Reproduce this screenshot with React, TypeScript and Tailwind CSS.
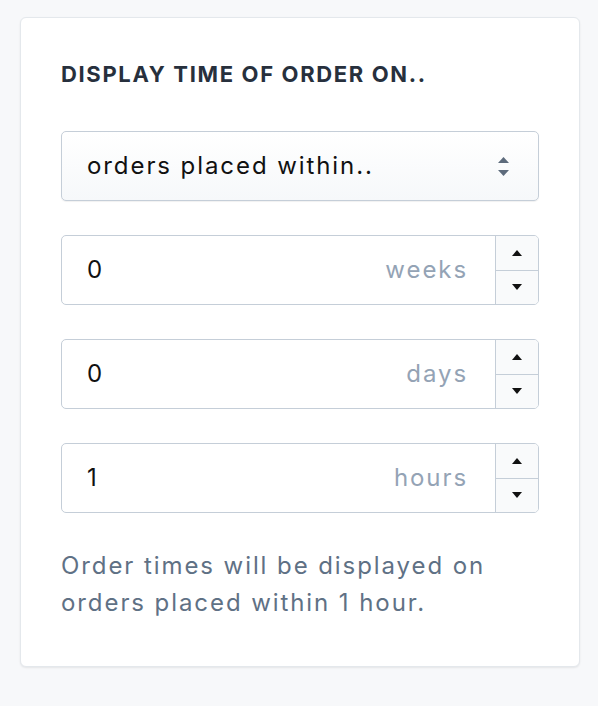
import React, { useState } from 'react';

const Spinner: React.FC = () => (
  <div className="flex w-[43px] flex-col border-l border-[#c5ced8] bg-[#f9fafb]">
    <button className="flex flex-1 items-center justify-center border-b border-[#c5ced8]">
      <svg width="10" height="6" viewBox="0 0 10 6">
        <path d="M5 0 L10 6 L0 6 Z" fill="#111" />
      </svg>
    </button>
    <button className="flex flex-1 items-center justify-center">
      <svg width="10" height="6" viewBox="0 0 10 6">
        <path d="M0 0 L10 0 L5 6 Z" fill="#111" />
      </svg>
    </button>
  </div>
);

const UnitInput: React.FC<{ value: number; unit: string }> = ({ value, unit }) => (
  <div className="flex h-[70px] overflow-hidden rounded-[5px] border border-[#c5ced8] bg-white">
    <div className="flex flex-1 items-center justify-between pl-[25px] pr-[27px]">
      <span className="text-[24px] tracking-[0.08em] text-[#111]">{value}</span>
      <span className="text-[24px] tracking-[0.08em] text-[#94a3b5]">{unit}</span>
    </div>
    <Spinner />
  </div>
);

export default function App() {
  const [values] = useState([
    { value: 0, unit: 'weeks' },
    { value: 0, unit: 'days' },
    { value: 1, unit: 'hours' },
  ]);

  return (
    <div className="min-h-[706px] bg-[#f7f8fa] pl-[20px] pr-[18px] pt-[17px] font-['Inter',sans-serif]">
      <div className="rounded-[6px] border border-[#e4e8ec] bg-white px-[40px] pb-[45px] pt-[42px] shadow-[0_1px_2px_rgba(0,0,0,0.08)]">
        <h3 className="text-[22px] font-bold uppercase leading-[28px] tracking-[0.075em] text-[#27303d]">
          Display time of order on..
        </h3>

        <div className="mt-[43px] flex h-[70px] items-center justify-between rounded-[5px] border border-[#c5ced8] bg-gradient-to-b from-white to-[#f6f8fa] pl-[25px] pr-[29px] shadow-[0_1px_1px_rgba(0,0,0,0.06)]">
          <span className="text-[24px] tracking-[0.08em] text-[#111]">orders placed within..</span>
          <svg width="11" height="19" viewBox="0 0 11 19">
            <path d="M5.5 0 L11 6 L0 6 Z" fill="#5d6b7c" />
            <path d="M0 13 L11 13 L5.5 19 Z" fill="#5d6b7c" />
          </svg>
        </div>

        <div className="mt-[34px] flex flex-col gap-[34px]">
          {values.map((v) => (
            <UnitInput key={v.unit} value={v.value} unit={v.unit} />
          ))}
        </div>

        <p className="mt-[34px] text-[24px] leading-[37px] tracking-[0.08em] text-[#5f7185]">
          Order times will be displayed on
          <br />
          orders placed within 1 hour.
        </p>
      </div>
    </div>
  );
}
